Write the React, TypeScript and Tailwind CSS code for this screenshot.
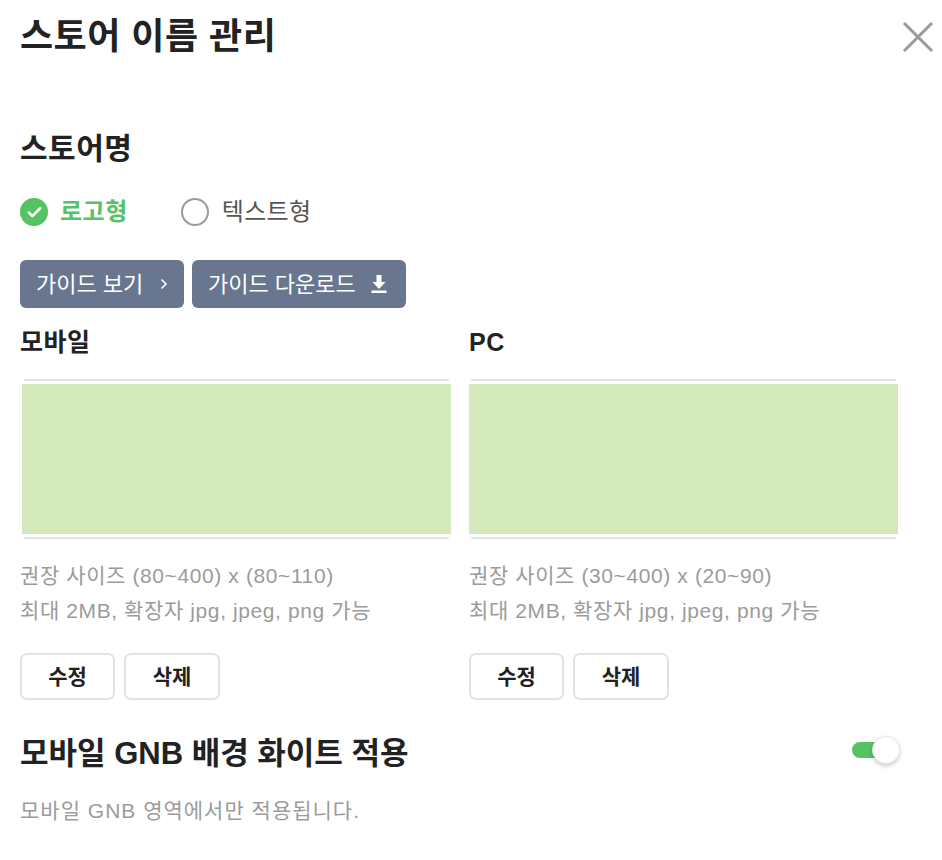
import { Check, ChevronRight } from "lucide-react";
import clsx from "clsx";

const font = "font-['Liberation_Sans','Noto_Sans_CJK_KR',sans-serif]";

type ImageBlockProps = {
  label: string;
  size: string;
  inset?: boolean;
};

function ImageBlock({ label, size, inset }: ImageBlockProps) {
  return (
    <div>
      <h3 className="text-[25px] leading-[30px] font-bold tracking-[0.5px] text-[#222]">{label}</h3>
      <div className={clsx("mt-[22px]", inset && "ml-[2px]")}>
        <div className="mx-[2px] h-[2px] rounded-full bg-[#e2e2e2]" />
        <div className="mt-[3px] h-[150px] bg-[#d3e8bb]" />
        <div className="mx-[2px] mt-[3px] h-[2px] rounded-full bg-[#e2e2e2]" />
      </div>
      <div className="mt-[19px] text-[21px] leading-[35px] tracking-[0.6px] text-[#9b9b9b]">
        <p>{size}</p>
        <p>최대 2MB, 확장자 jpg, jpeg, png 가능</p>
      </div>
      <div className="mt-[25px] flex gap-[9px]">
        <button
          type="button"
          className="h-[47px] w-[95px] rounded-[7px] border-2 border-[#e2e2e2] bg-white text-[21px] font-bold text-[#222]"
        >
          수정
        </button>
        <button
          type="button"
          className="h-[47px] w-[96px] rounded-[7px] border-2 border-[#e2e2e2] bg-white text-[21px] font-bold text-[#222]"
        >
          삭제
        </button>
      </div>
    </div>
  );
}

export default function App() {
  return (
    <div className={`${font} min-h-[860px] w-[942px] bg-white px-5 text-[#222]`}>
      <header className="flex items-start justify-between pt-[17px]">
        <h1 className="text-[36px] leading-[40px] font-bold tracking-[0.5px] text-[#222]">
          스토어 이름 관리
        </h1>
        <button type="button" className="mt-[4px] -mr-[12px] text-[#9a9a9a]" aria-label="닫기">
          <svg width="32" height="32" viewBox="0 0 32 32" fill="none">
            <path d="M2 2L30 30M30 2L2 30" stroke="currentColor" strokeWidth="3" />
          </svg>
        </button>
      </header>

      <h2 className="mt-[75px] text-[30px] leading-[34px] font-bold tracking-[0.5px]">스토어명</h2>

      <div className="mt-[32px] flex h-[28px] items-center">
        <label className="flex items-center gap-[12px]">
          <span className="flex h-[28px] w-[28px] items-center justify-center rounded-full bg-[#55c363]">
            <Check className="h-[17px] w-[17px] text-white" strokeWidth={3.5} />
          </span>
          <span className="text-[24px] font-bold tracking-[0.5px] text-[#55c363]">로고형</span>
        </label>
        <label className="ml-[53px] flex items-center gap-[13px]">
          <span className="h-[28px] w-[28px] rounded-full border-2 border-[#9a9a9a] bg-white" />
          <span className="text-[24px] tracking-[0.3px] text-[#555]">텍스트형</span>
        </label>
      </div>

      <div className="mt-[34px] flex gap-[8px]">
        <button
          type="button"
          className="flex h-[48px] w-[164px] items-center rounded-[6px] bg-[#69768f] pl-[16px] text-[22px] text-white"
        >
          가이드 보기
          <ChevronRight className="ml-[13px] h-[16px] w-[16px]" strokeWidth={2.5} />
        </button>
        <button
          type="button"
          className="flex h-[48px] w-[214px] items-center rounded-[6px] bg-[#69768f] pl-[16px] text-[22px] text-white"
        >
          가이드 다운로드
          <svg className="ml-[14px]" width="18" height="20" viewBox="0 0 17 20" fill="white">
            <path d="M6 1h5v7h4l-6.5 7L2 8h4z" />
            <rect x="1" y="16.5" width="15" height="2.5" />
          </svg>
        </button>
      </div>

      <div className="mt-[19px] grid w-[878px] grid-cols-[431px_429px] gap-[18px]">
        <ImageBlock label="모바일" size="권장 사이즈 (80~400) x (80~110)" inset />
        <ImageBlock label="PC" size="권장 사이즈 (30~400) x (20~90)" />
      </div>

      <div className="mt-[36px] flex items-center justify-between">
        <h2 className="text-[31px] leading-[36px] font-bold">모바일 GNB 배경 화이트 적용</h2>
        <div className="relative mr-[22px] -mt-[8px] h-[30px] w-[50px]">
          <div className="absolute top-[7px] left-[2px] h-[16px] w-[30px] rounded-full bg-[#55c363]" />
          <div className="absolute top-[1px] right-0 h-[28px] w-[28px] rounded-full border border-[#e8e8e8] bg-white shadow-[0_2px_4px_rgba(0,0,0,0.2)]" />
        </div>
      </div>

      <p className="mt-[27px] text-[21px] leading-[24px] tracking-[1px] text-[#9b9b9b]">
        모바일 GNB 영역에서만 적용됩니다.
      </p>
    </div>
  );
}
